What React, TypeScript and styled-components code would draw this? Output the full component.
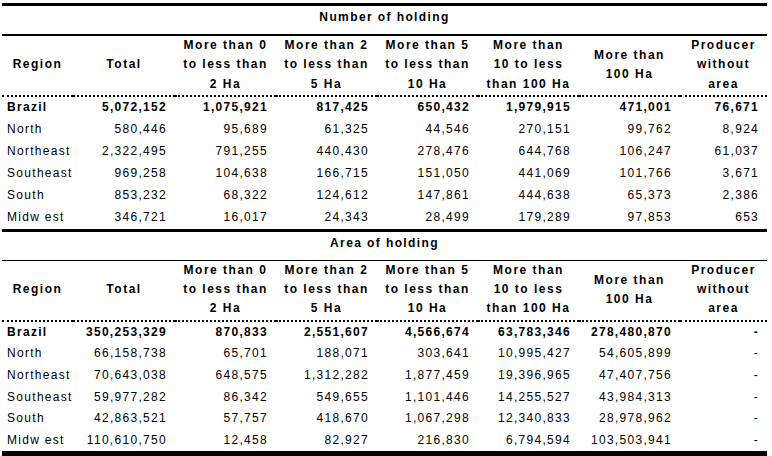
import React from "react";
import styled, { createGlobalStyle } from "styled-components";

const GlobalStyle = createGlobalStyle`
  html, body {
    margin: 0;
    padding: 0;
    background: #ffffff;
  }
  body {
    font-family: "Liberation Sans", Arial, sans-serif;
    color: #000;
  }
`;

const Page = styled.div`
  padding: 3px 0 0 2px;
  width: 772px;
  height: 456px;
  box-sizing: border-box;
  overflow: hidden;
`;

const Table = styled.table`
  width: 765px;
  table-layout: fixed;
  border-collapse: separate;
  border-spacing: 0;
  font-family: "Liberation Sans", Arial, sans-serif;
  font-size: 12px;
  letter-spacing: 1.3px;
  color: #000;
`;

const TitleCell = styled.th<{ $first?: boolean }>`
  border-top: 3px solid #000;
  border-bottom: ${(p) => (p.$first ? "2px" : "1px")} solid #000;
  padding: 1px 0 7px 0;
  line-height: 20px;
  font-weight: bold;
  text-align: center;
  letter-spacing: 1.4px;
`;

const HeadCell = styled.th`
  padding: 0 0 1px 0;
  line-height: 19.3px;
  height: 57px;
  font-weight: bold;
  text-align: center;
  vertical-align: middle;
  letter-spacing: 1.5px;
  border-bottom: 2px dotted #000;
  white-space: nowrap;
  box-sizing: border-box;
`;

const Row = styled.tr<{ $strong?: boolean }>`
  font-weight: ${(p) => (p.$strong ? "bold" : "normal")};
`;

const Cell = styled.td<{ $label?: boolean; $last?: boolean; $end?: boolean; $tight?: boolean }>`
  padding: 0 ${(p) => (p.$label ? "0" : "8px")} 1px ${(p) => (p.$label ? "5px" : "0")};
  line-height: ${(p) => (p.$tight ? "20.6px" : "21px")};
  text-align: ${(p) => (p.$label ? "left" : "right")};
  white-space: nowrap;
  border-bottom: ${(p) => (p.$last && p.$end ? "5px" : "0")} solid #000;
`;

const cols = [71, 102, 101, 101, 101, 101, 101, 87];

const headers: React.ReactNode[] = [
  "Region",
  "Total",
  <>More than 0<br />to less than<br />2 Ha</>,
  <>More than 2<br />to less than<br />5 Ha</>,
  <>More than 5<br />to less than<br />10 Ha</>,
  <>More than<br />10 to less<br />than 100 Ha</>,
  <>More than<br />100 Ha</>,
  <>Producer<br />without<br />area</>,
];

type Block = { title: string; rows: string[][] };

const blocks: Block[] = [
  {
    title: "Number of holding",
    rows: [
      ["Brazil", "5,072,152", "1,075,921", "817,425", "650,432", "1,979,915", "471,001", "76,671"],
      ["North", "580,446", "95,689", "61,325", "44,546", "270,151", "99,762", "8,924"],
      ["Northeast", "2,322,495", "791,255", "440,430", "278,476", "644,768", "106,247", "61,037"],
      ["Southeast", "969,258", "104,638", "166,715", "151,050", "441,069", "101,766", "3,671"],
      ["South", "853,232", "68,322", "124,612", "147,861", "444,638", "65,373", "2,386"],
      ["Midw est", "346,721", "16,017", "24,343", "28,499", "179,289", "97,853", "653"],
    ],
  },
  {
    title: "Area of holding",
    rows: [
      ["Brazil", "350,253,329", "870,833", "2,551,607", "4,566,674", "63,783,346", "278,480,870", "-"],
      ["North", "66,158,738", "65,701", "188,071", "303,641", "10,995,427", "54,605,899", "-"],
      ["Northeast", "70,643,038", "648,575", "1,312,282", "1,877,459", "19,396,965", "47,407,756", "-"],
      ["Southeast", "59,977,282", "86,342", "549,655", "1,101,446", "14,255,527", "43,984,313", "-"],
      ["South", "42,863,521", "57,757", "418,670", "1,067,298", "12,340,833", "28,978,962", "-"],
      ["Midw est", "110,610,750", "12,458", "82,927", "216,830", "6,794,594", "103,503,941", "-"],
    ],
  },
];

export default function App() {
  return (
    <>
      <GlobalStyle />
      <Page>
        <Table>
          <colgroup>
            {cols.map((w, i) => (
              <col key={i} style={{ width: w }} />
            ))}
          </colgroup>
          {blocks.map((b, bi) => (
            <tbody key={b.title}>
              <tr>
                <TitleCell colSpan={8} $first={bi === 0}>
                  {b.title}
                </TitleCell>
              </tr>
              <tr>
                {headers.map((h, i) => (
                  <HeadCell key={i}>{h}</HeadCell>
                ))}
              </tr>
              {b.rows.map((r, ri) => (
                <Row key={r[0]} $strong={ri === 0}>
                  {r.map((v, ci) => (
                    <Cell
                      key={ci}
                      $label={ci === 0}
                      $last={ri === b.rows.length - 1}
                      $end={bi === blocks.length - 1}
                      $tight={bi === blocks.length - 1}
                    >
                      {v}
                    </Cell>
                  ))}
                </Row>
              ))}
            </tbody>
          ))}
        </Table>
      </Page>
    </>
  );
}
